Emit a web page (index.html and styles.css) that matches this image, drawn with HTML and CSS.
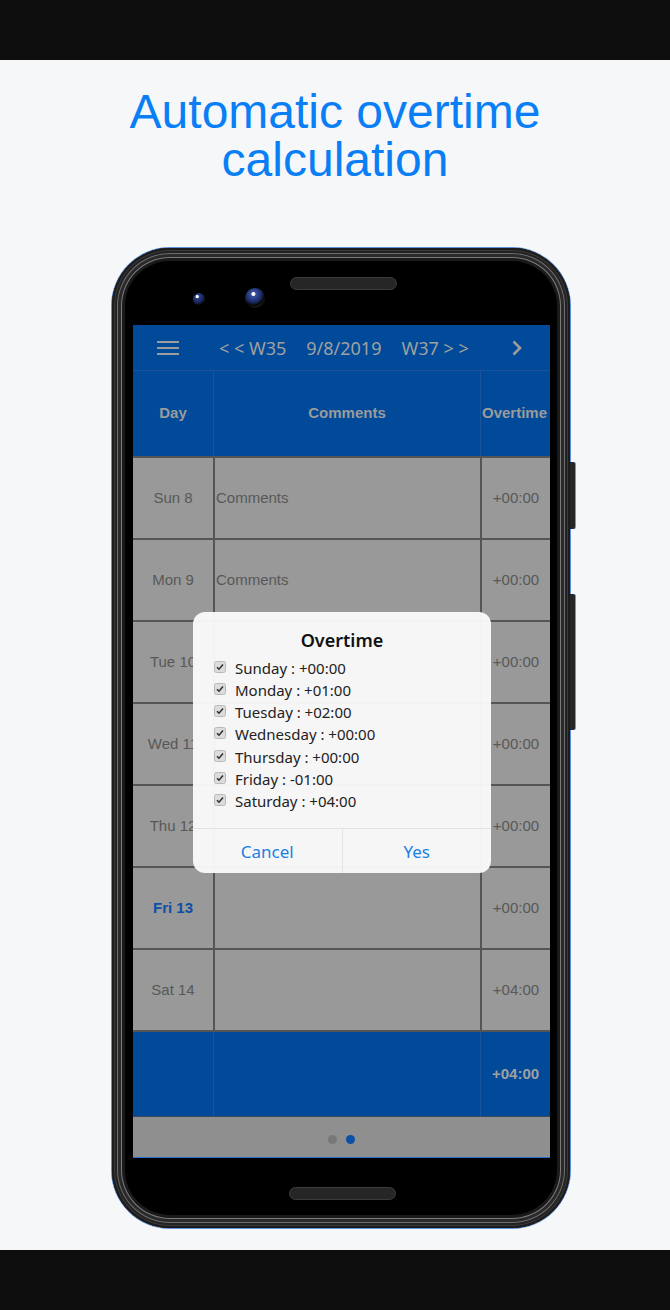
FILE: index.html
```html
<!DOCTYPE html>
<html lang="en">
<head>
<meta charset="utf-8">
<title>Automatic overtime calculation</title>
<link rel="stylesheet" href="styles.css">
</head>
<body>
<div class="bar"></div>
<main class="stage">
  <h1 class="title">Automatic overtime<br>calculation</h1>
  <div class="phone">
    <span class="side-btn side-btn--a"></span>
    <span class="side-btn side-btn--b"></span>
    <div class="bezel-top">
      <span class="cam cam--small"></span>
      <span class="cam cam--big"></span>
      <span class="speaker speaker--top"></span>
    </div>
    <div class="screen">
      <header class="app-bar">
        <svg class="burger" width="22" height="14" viewBox="0 0 22 14"><path d="M0 1h22M0 7h22M0 13h22" stroke="#9c9c9c" stroke-width="2"/></svg>
        <nav class="week-nav">
          <span>&lt; &lt; W35</span>
          <span>9/8/2019</span>
          <span>W37 &gt; &gt;</span>
        </nav>
        <svg class="chev" width="12" height="16" viewBox="0 0 12 16"><path d="M2.5 1.5 9 8l-6.5 6.5" fill="none" stroke="#9c9c9c" stroke-width="2.6"/></svg>
      </header>
      <div class="table">
        <div class="row row--head">
          <div class="cell c-day">Day</div>
          <div class="cell c-com">Comments</div>
          <div class="cell c-ot">Overtime</div>
        </div>
        <div class="row"><div class="cell c-day">Sun 8</div><div class="cell c-com left">Comments</div><div class="cell c-ot">+00:00</div></div>
        <div class="row"><div class="cell c-day">Mon 9</div><div class="cell c-com left">Comments</div><div class="cell c-ot">+00:00</div></div>
        <div class="row"><div class="cell c-day">Tue 10</div><div class="cell c-com left"></div><div class="cell c-ot">+00:00</div></div>
        <div class="row"><div class="cell c-day">Wed 11</div><div class="cell c-com left"></div><div class="cell c-ot">+00:00</div></div>
        <div class="row"><div class="cell c-day">Thu 12</div><div class="cell c-com left"></div><div class="cell c-ot">+00:00</div></div>
        <div class="row"><div class="cell c-day today">Fri 13</div><div class="cell c-com left"></div><div class="cell c-ot">+00:00</div></div>
        <div class="row"><div class="cell c-day">Sat 14</div><div class="cell c-com left"></div><div class="cell c-ot">+04:00</div></div>
        <div class="row row--foot">
          <div class="cell c-day"></div>
          <div class="cell c-com"></div>
          <div class="cell c-ot">+04:00</div>
        </div>
      </div>
      <div class="pager"><span class="dot"></span><span class="dot dot--on"></span></div>

      <div class="dialog">
        <div class="dialog-title">Overtime</div>
        <ul class="checks">
          <li><span class="box"><svg width="12" height="12" viewBox="0 0 12 12"><rect x="0.5" y="0.5" width="11" height="11" rx="2" fill="#dcdcdc" stroke="#b9b9b9"/><path d="M3 6.2 5 8.2 9 3.6" fill="none" stroke="#333" stroke-width="1.6"/></svg></span>Sunday : +00:00</li>
          <li><span class="box"><svg width="12" height="12" viewBox="0 0 12 12"><rect x="0.5" y="0.5" width="11" height="11" rx="2" fill="#dcdcdc" stroke="#b9b9b9"/><path d="M3 6.2 5 8.2 9 3.6" fill="none" stroke="#333" stroke-width="1.6"/></svg></span>Monday : +01:00</li>
          <li><span class="box"><svg width="12" height="12" viewBox="0 0 12 12"><rect x="0.5" y="0.5" width="11" height="11" rx="2" fill="#dcdcdc" stroke="#b9b9b9"/><path d="M3 6.2 5 8.2 9 3.6" fill="none" stroke="#333" stroke-width="1.6"/></svg></span>Tuesday : +02:00</li>
          <li><span class="box"><svg width="12" height="12" viewBox="0 0 12 12"><rect x="0.5" y="0.5" width="11" height="11" rx="2" fill="#dcdcdc" stroke="#b9b9b9"/><path d="M3 6.2 5 8.2 9 3.6" fill="none" stroke="#333" stroke-width="1.6"/></svg></span>Wednesday : +00:00</li>
          <li><span class="box"><svg width="12" height="12" viewBox="0 0 12 12"><rect x="0.5" y="0.5" width="11" height="11" rx="2" fill="#dcdcdc" stroke="#b9b9b9"/><path d="M3 6.2 5 8.2 9 3.6" fill="none" stroke="#333" stroke-width="1.6"/></svg></span>Thursday : +00:00</li>
          <li><span class="box"><svg width="12" height="12" viewBox="0 0 12 12"><rect x="0.5" y="0.5" width="11" height="11" rx="2" fill="#dcdcdc" stroke="#b9b9b9"/><path d="M3 6.2 5 8.2 9 3.6" fill="none" stroke="#333" stroke-width="1.6"/></svg></span>Friday : -01:00</li>
          <li><span class="box"><svg width="12" height="12" viewBox="0 0 12 12"><rect x="0.5" y="0.5" width="11" height="11" rx="2" fill="#dcdcdc" stroke="#b9b9b9"/><path d="M3 6.2 5 8.2 9 3.6" fill="none" stroke="#333" stroke-width="1.6"/></svg></span>Saturday : +04:00</li>
        </ul>
        <div class="actions">
          <button class="act">Cancel</button>
          <button class="act">Yes</button>
        </div>
      </div>
    </div>
    <div class="bezel-bottom"><span class="speaker"></span></div>
  </div>
</main>
<div class="bar"></div>
</body>
</html>
```

FILE: styles.css
```css
* { box-sizing: border-box; }
html, body { margin: 0; padding: 0; }
body {
  width: 670px;
  height: 1310px;
  background: #f5f7f9;
  font-family: "Liberation Sans", Arial, sans-serif;
  overflow: hidden;
}
.bar { height: 60px; background: #0e0e0e; }
.stage {
  height: 1190px;
  padding-top: 28px;
}
.title {
  margin: 0;
  text-align: center;
  font-weight: normal;
  font-size: 48px;
  line-height: 48px;
  color: #0a7ff5;
  font-family: "Liberation Sans", Arial, sans-serif;
}

/* phone */
.phone {
  position: relative;
  margin: 64px 0 0 112px;
  width: 458px;
  height: 980px;
  border-radius: 58px;
  background: #000;
  box-shadow:
    0 0 0 1px rgba(40, 110, 210, 0.75),
    inset 0 0 0 2px #1c1c1c,
    inset 0 0 0 3px #3a3a3a,
    inset 0 0 0 5px #222,
    inset 0 0 0 6px #6e6e6e,
    inset 0 0 0 9px #2a2a2a,
    inset 0 0 0 10px #7a7a7a,
    inset 0 0 0 13px #1a1a1a;
  display: flex;
  flex-direction: column;
}
.side-btn {
  position: absolute;
  right: -5px;
  width: 5px;
  background: #262626;
  border-radius: 0 2px 2px 0;
  box-shadow: 1px 0 0 rgba(40, 110, 210, 0.7);
}
.side-btn--a { top: 214px; height: 67px; }
.side-btn--b { top: 346px; height: 136px; }

.bezel-top {
  height: 77px;
  display: flex;
  align-items: flex-start;
}
.cam {
  border-radius: 50%;
  background: radial-gradient(circle at 35% 30%, #fff 0 1.2px, #2c3f8a 2px, #13204a 60%, #050505 75%);
}
.cam--small { width: 12px; height: 12px; margin: 45px 0 0 81px; }
.cam--big {
  width: 20px; height: 20px; margin: 40px 0 0 40px;
  background: radial-gradient(circle at 42% 30%, #fff 0 1.5px, #3a4f9c 2.5px, #1b2a66 45%, #080808 62%, #1a1a1a 75%, #050505 80%);
}
.speaker {
  display: block;
  width: 107px;
  height: 13px;
  border-radius: 7px;
  background: #262626;
  border: 1px solid #3c3c3c;
}
.speaker--top { margin: 29px 0 0 25px; }
.bezel-bottom { height: 70px; padding: 29px 0 0 177px; }

/* screen */
.screen {
  position: relative;
  margin-left: 21px;
  width: 417px;
  height: 833px;
  display: flex;
  flex-direction: column;
  overflow: hidden;
  border-bottom: 1px solid #2a6fd0;
}
.app-bar {
  height: 45px;
  flex: none;
  background: #004a99;
  display: flex;
  align-items: center;
  font-family: "Noto Sans", "Open Sans", sans-serif;
  font-size: 18px;
  color: #a0a0a0;
}
.burger { margin-left: 24px; flex: none; }
.week-nav {
  display: flex;
  gap: 20px;
  margin-left: 40px;
  white-space: nowrap;
}
.chev { margin-left: auto; margin-right: 27px; flex: none; }

.table { flex: none; }
.row {
  display: flex;
  height: 82px;
  background: #999999;
  border-top: 2px solid #555555;
  color: #585858;
  font-size: 15px;
}
.cell {
  display: flex;
  align-items: center;
  justify-content: center;
  white-space: nowrap;
  overflow: hidden;
  padding-bottom: 2px;
}
.c-day { width: 82px; border-right: 2px solid #555555; }
.c-com { width: 267px; border-right: 2px solid #555555; }
.c-ot { width: 68px; }
.left { justify-content: flex-start; padding-left: 1px; }
.today { color: #0c4fa6; font-weight: bold; }

.row--head {
  height: 86px;
  border-top: 1px solid #1b5299;
  background: #004a99;
  color: #9b9b9b;
  font-weight: bold;
}
.row--head .cell, .row--foot .cell { border-right-color: #1c549c; border-right-width: 1px; }
.row--head .c-day, .row--foot .c-day { width: 81px; }
.row--head .c-com, .row--foot .c-com { width: 267px; }
.row--head .c-ot, .row--foot .c-ot { width: 69px; justify-content: flex-start; padding-left: 1px; }
.row--foot .c-ot { justify-content: center; padding-left: 0; }
.row--foot {
  height: 87px;
  background: #004a99;
  color: #a0a0a0;
  font-weight: bold;
  border-bottom: 1px solid #3d4a5c;
}

.pager {
  flex: 1;
  background: #8f8f8f;
  display: flex;
  justify-content: center;
  align-items: center;
  gap: 9px;
  padding-top: 5px;
}
.dot { width: 9px; height: 9px; border-radius: 50%; background: #787878; }
.dot--on { background: #0b4fa6; }

/* dialog */
.dialog {
  position: absolute;
  left: 60px;
  top: 287px;
  width: 298px;
  height: 261px;
  border-radius: 12px;
  background: rgba(250, 250, 250, 0.96);
  font-family: "Noto Sans", "Open Sans", sans-serif;
  padding-top: 16px;
  display: flex;
  flex-direction: column;
}
.dialog-title {
  text-align: center;
  font-size: 18px;
  line-height: 24px;
  font-weight: 600;
  color: #111;
}
.checks {
  list-style: none;
  margin: 5px 0 0;
  padding: 0 0 0 21px;
  height: 155px;
}
.checks li {
  display: flex;
  align-items: center;
  height: 22.15px;
  font-size: 15px;
  color: #222;
  white-space: nowrap;
}
.box { display: flex; width: 12px; height: 12px; margin-right: 9px; margin-top: -2px; }
.actions {
  margin-top: auto;
  height: 45px;
  display: flex;
  border-top: 1px solid #e4e4e4;
}
.act {
  flex: 1;
  border: 0;
  background: none;
  font-family: inherit;
  font-size: 17px;
  color: #1a80e5;
  padding: 0;
}
.act + .act { border-left: 1px solid #e4e4e4; }
```
